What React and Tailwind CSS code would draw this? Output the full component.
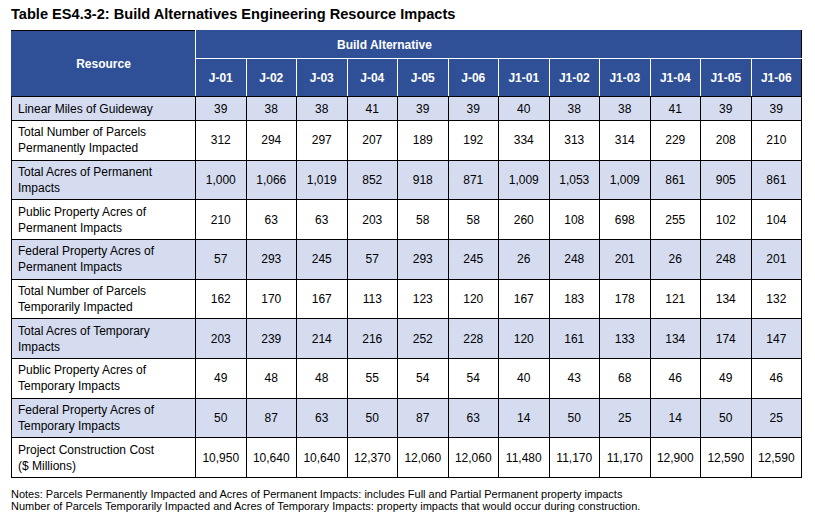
import React from 'react';

const cols = ['J-01', 'J-02', 'J-03', 'J-04', 'J-05', 'J-06', 'J1-01', 'J1-02', 'J1-03', 'J1-04', 'J1-05', 'J1-06'];

const rows = [
    { label: ['Linear Miles of Guideway'], values: ['39', '38', '38', '41', '39', '39', '40', '38', '38', '41', '39', '39'] },
    { label: ['Total Number of Parcels', 'Permanently Impacted'], values: ['312', '294', '297', '207', '189', '192', '334', '313', '314', '229', '208', '210'] },
    { label: ['Total Acres of Permanent', 'Impacts'], values: ['1,000', '1,066', '1,019', '852', '918', '871', '1,009', '1,053', '1,009', '861', '905', '861'] },
    { label: ['Public Property Acres of', 'Permanent Impacts'], values: ['210', '63', '63', '203', '58', '58', '260', '108', '698', '255', '102', '104'] },
    { label: ['Federal Property Acres of', 'Permanent Impacts'], values: ['57', '293', '245', '57', '293', '245', '26', '248', '201', '26', '248', '201'] },
    { label: ['Total Number of Parcels', 'Temporarily Impacted'], values: ['162', '170', '167', '113', '123', '120', '167', '183', '178', '121', '134', '132'] },
    { label: ['Total Acres of Temporary', 'Impacts'], values: ['203', '239', '214', '216', '252', '228', '120', '161', '133', '134', '174', '147'] },
    { label: ['Public Property Acres of', 'Temporary Impacts'], values: ['49', '48', '48', '55', '54', '54', '40', '43', '68', '46', '49', '46'] },
    { label: ['Federal Property Acres of', 'Temporary Impacts'], values: ['50', '87', '63', '50', '87', '63', '14', '50', '25', '14', '50', '25'] },
    { label: ['Project Construction Cost', '($ Millions)'], values: ['10,950', '10,640', '10,640', '12,370', '12,060', '12,060', '11,480', '11,170', '11,170', '12,900', '12,590', '12,590'] },
];

export default function App() {
    return (
        <div className="min-h-screen bg-white text-black font-['Liberation_Sans',Arial,sans-serif] pl-[11px] pt-[5px]">
            <h1 className="text-[14.6px] font-bold leading-[18px]">
                Table ES4.3-2: Build Alternatives Engineering Resource Impacts
            </h1>

            <table className="mt-[7px] w-[791px] table-fixed border-collapse text-[12px] leading-[16px]">
                <colgroup>
                    <col className="w-[184px]" />
                    {cols.map(c => <col key={c} className="w-[50.5px]" />)}
                </colgroup>
                <thead className="bg-[#2f4f96] text-white font-bold">
                    <tr className="h-[28px]">
                        {/* header block: white rules inside, black edge only on top-left and right */}
                        <th rowSpan={2} className="border border-black border-l-[#2f4f96] border-r-white text-center">Resource</th>
                        <th colSpan={12} className="border border-[#2f4f96] border-r-black border-b-white border-l-white text-left pl-[141px]">Build Alternative</th>
                    </tr>
                    <tr className="h-[38px]">
                        {cols.map((c, i) => (
                            <th
                                key={c}
                                className={`border-t border-t-white border-b border-b-black text-center ${i === cols.length - 1 ? 'border-r border-r-black' : 'border-r border-r-white'}`}
                            >
                                {c}
                            </th>
                        ))}
                    </tr>
                </thead>
                <tbody>
                    {rows.map((r, i) => (
                        <tr key={i} className={`${i === 0 ? 'h-[24px]' : 'h-[39.67px]'} ${i % 2 === 0 ? 'bg-[#d5dcf0]' : 'bg-white'}`}>
                            <td className="border border-black pl-[6px] align-middle">
                                {r.label.map((l, j) => <div key={j}>{l}</div>)}
                            </td>
                            {r.values.map((v, j) => (
                                <td key={j} className="border border-black text-center align-middle">{v}</td>
                            ))}
                        </tr>
                    ))}
                </tbody>
            </table>

            <div className="mt-[10px] text-[11px] leading-[12px]">
                <p>Notes: Parcels Permanently Impacted and Acres of Permanent Impacts: includes Full and Partial Permanent property impacts</p>
                <p>Number of Parcels Temporarily Impacted and Acres of Temporary Impacts: property impacts that would occur during construction.</p>
            </div>
        </div>
    );
}
